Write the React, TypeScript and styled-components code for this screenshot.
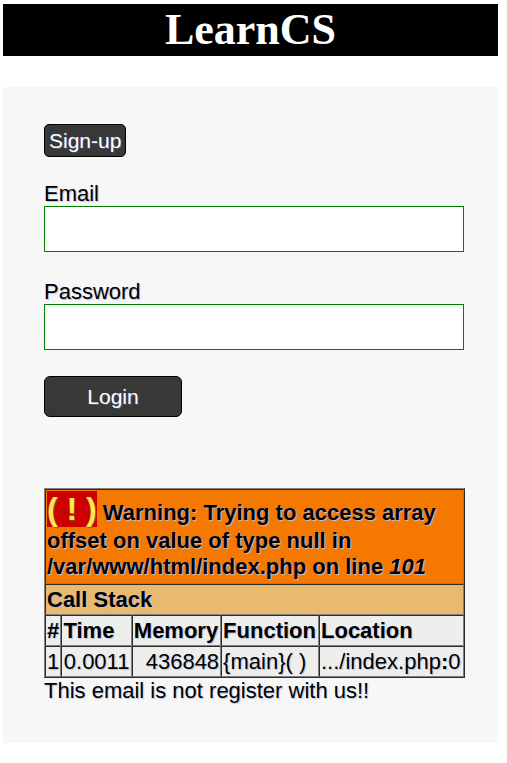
import React from "react";
import styled, { createGlobalStyle } from "styled-components";

const Global = createGlobalStyle`
  html, body { margin: 0; padding: 0; background: #ffffff; }
  body {
    font-family: "Liberation Sans", Arial, sans-serif;
    font-size: 22px;
    color: #000;
  }
`;

const Page = styled.div`
  width: 495px;
  margin-left: 3px;
  padding-top: 4px;
  text-shadow: 1px 1px 1px #b4c4dc;
`;

const Header = styled.header`
  background: #000;
  height: 52px;
  display: flex;
  align-items: center;
  justify-content: center;
`;

const Title = styled.h1`
  margin: 0;
  font-family: "Liberation Serif", "Times New Roman", serif;
  font-weight: bold;
  font-size: 44px;
  line-height: 52px;
  color: #fff;
  text-shadow: none;
`;

const Card = styled.main`
  margin-top: 31px;
  background: #f7f7f7;
  height: 656px;
  box-sizing: border-box;
  padding: 37px 33px 0 41px;
`;

const Form = styled.form`
  display: flex;
  flex-direction: column;
  align-items: flex-start;
`;

const SmallButton = styled.button`
  font-family: "Liberation Sans", Arial, sans-serif;
  font-size: 21px;
  line-height: 23px;
  color: #fff;
  background: #383838;
  border: 1px solid #000;
  border-radius: 5px;
  padding: 4px 4px;
  text-shadow: 1px 1px 1px #4a5870;
  cursor: pointer;
`;

const Label = styled.label<{ $top: number }>`
  display: block;
  margin-top: ${(p) => p.$top}px;
  line-height: 25px;
`;

const Input = styled.input`
  box-sizing: border-box;
  width: 420px;
  height: 46px;
  border: 1px solid #008000;
  background: #fff;
  margin: 0;
  outline: none;
`;

const LoginButton = styled.button`
  box-sizing: border-box;
  margin-top: 26px;
  width: 138px;
  height: 41px;
  font-family: "Liberation Sans", Arial, sans-serif;
  font-size: 21px;
  color: #fff;
  background: #383838;
  border: 1px solid #000;
  border-radius: 6px;
  text-shadow: 1px 1px 1px #4a5870;
  cursor: pointer;
`;

const ErrorTable = styled.table`
  margin-top: 71px;
  border: 1px outset #808080;
  border-spacing: 0;
  font-size: 22px;
`;

const Th = styled.th<{ $bg: string; $align?: string }>`
  background: ${(p) => p.$bg};
  text-align: ${(p) => p.$align || "left"};
  border: 1px inset #808080;
  padding: 1px;
  font-weight: bold;
  line-height: 27px;
`;

const WarnTh = styled(Th)`
  line-height: normal;
  padding-bottom: 3px;
`;

const Td = styled.td<{ $align?: string }>`
  background: #eeeeec;
  text-align: ${(p) => p.$align || "left"};
  border: 1px inset #808080;
  padding: 1px;
  line-height: 27px;
  white-space: nowrap;
`;

const Bang = styled.span`
  background-color: #cc0000;
  color: #fce94f;
  font-size: 32px;
  text-shadow: 1px 1px 1px #8a5a20;
`;

const Message = styled.div`
  line-height: 25px;
`;

export default function App() {
  return (
    <>
      <Global />
      <Page>
        <Header>
          <Title>LearnCS</Title>
        </Header>
        <Card>
          <Form onSubmit={(e) => e.preventDefault()}>
            <SmallButton type="button">Sign-up</SmallButton>
            <Label $top={24}>Email</Label>
            <Input type="email" />
            <Label $top={27}>Password</Label>
            <Input type="password" />
            <LoginButton type="submit">Login</LoginButton>
          </Form>
          <ErrorTable dir="ltr">
            <tbody>
              <tr>
                <WarnTh $bg="#f57900" colSpan={5}>
                  <Bang>( ! )</Bang> Warning: Trying to access array offset on value of type null in /var/www/html/index.php on line <i>101</i>
                </WarnTh>
              </tr>
              <tr>
                <Th $bg="#e9b96e" colSpan={5}>Call Stack</Th>
              </tr>
              <tr>
                <Th $bg="#eeeeec" $align="center">#</Th>
                <Th $bg="#eeeeec">Time</Th>
                <Th $bg="#eeeeec">Memory</Th>
                <Th $bg="#eeeeec">Function</Th>
                <Th $bg="#eeeeec">Location</Th>
              </tr>
              <tr>
                <Td $align="center">1</Td>
                <Td $align="center">0.0011</Td>
                <Td $align="right">436848</Td>
                <Td>{"{main}( )"}</Td>
                <Td>.../index.php<b>:</b>0</Td>
              </tr>
            </tbody>
          </ErrorTable>
          <Message>This email is not register with us!!</Message>
        </Card>
      </Page>
    </>
  );
}
